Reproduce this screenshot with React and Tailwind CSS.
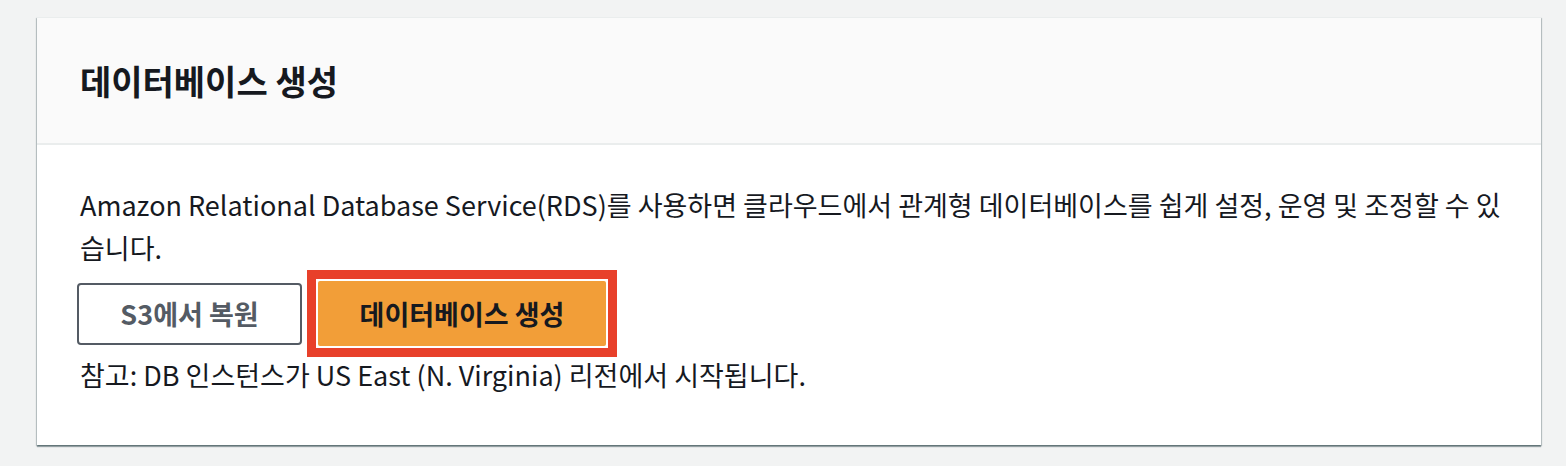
export default function App() {
  const font = { fontFamily: '"Noto Sans CJK KR", "Noto Sans", sans-serif' };
  return (
    <div className="w-full h-[466px] bg-[#f2f3f3] pt-[17px] pl-[37px] pr-[25px]" style={font}>
      <div className="bg-white border-t border-[#eaeded] shadow-[0_2px_1px_0_rgba(0,28,36,0.35),1px_1px_1px_0_rgba(0,28,36,0.2),-1px_1px_1px_0_rgba(0,28,36,0.2)]">
        <div className="h-[127px] bg-[#fafafa] border-b-2 border-[#eaeded] flex items-center px-[43px]">
          <h2 className="text-[34px] font-bold text-[#16191f] leading-none">데이터베이스 생성</h2>
        </div>
        <div className="h-[300px] pl-[43px] pr-[34px] pt-[38px] text-[#16191f]">
          <p className="text-[27px] leading-[43px]">
            Amazon Relational Database Service(RDS)를 사용하면 클라우드에서 관계형 데이터베이스를 쉽게 설정, 운영 및 조정할 수 있습니다.
          </p>
          <div className="flex items-center mt-[1px]">
            <button className="w-[225px] h-[62px] border-2 border-[#545b64] rounded-[4px] bg-white text-[#545b64] text-[27px] font-bold leading-none -ml-[3px]">
              S3에서 복원
            </button>
            <div className="ml-[5px] border-[9px] border-[#e8402a] p-[2px] bg-white">
              <button className="w-[288px] h-[65px] bg-[#f29e38] rounded-[2px] text-[#16191f] text-[27px] font-bold leading-none block">
                데이터베이스 생성
              </button>
            </div>
          </div>
          <p className="text-[27px] leading-[43px] -mt-[4px]">
            참고: DB 인스턴스가 US East (N. Virginia) 리전에서 시작됩니다.
          </p>
        </div>
      </div>
    </div>
  );
}
